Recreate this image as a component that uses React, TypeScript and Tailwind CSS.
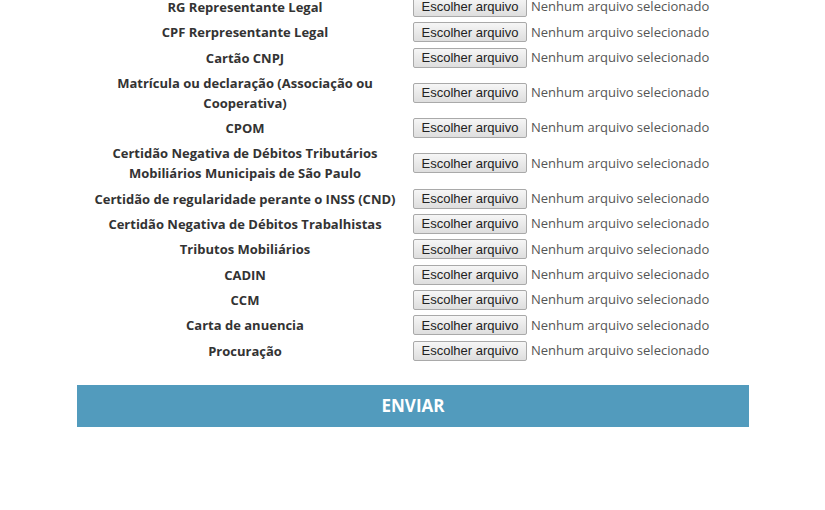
import React from "react";

const fields: string[] = [
  "RG Representante Legal",
  "CPF Rerpresentante Legal",
  "Cartão CNPJ",
  "Matrícula ou declaração (Associação ou Cooperativa)",
  "CPOM",
  "Certidão Negativa de Débitos Tributários Mobiliários Municipais de São Paulo",
  "Certidão de regularidade perante o INSS (CND)",
  "Certidão Negativa de Débitos Trabalhistas",
  "Tributos Mobiliários",
  "CADIN",
  "CCM",
  "Carta de anuencia",
  "Procuração",
];

// ─── File picker row ──────────────────────────────────────────────────────────

function FileRow({ label }: { label: string }) {
  return (
    <div className="grid grid-cols-2 items-center pb-[5.3px]">
      <label className="px-[14px] text-center text-[13px] font-bold leading-[20px] text-[#333]">
        {label}
      </label>
      <div className="flex items-center">
        <span
          className="flex h-[20px] w-[114px] items-center justify-center rounded-[2px] border border-[#a9a9a9] bg-gradient-to-b from-[#f6f6f6] to-[#dedede] text-[13px] text-[#222]"
          style={{ fontFamily: '"Liberation Sans", Arial, sans-serif' }}
        >
          Escolher arquivo
        </span>
        <span className="ml-[4px] text-[13px] text-[#555]">
          Nenhum arquivo selecionado
        </span>
      </div>
    </div>
  );
}

export default function App() {
  return (
    <div
      className="h-[510px] w-[825px] overflow-hidden bg-white"
      style={{ fontFamily: '"Open Sans", "Noto Sans", sans-serif' }}
    >
      <form className="mx-[77px] mt-[-3px] w-[672px]">
        {fields.map((f) => (
          <FileRow key={f} label={f} />
        ))}
        <button
          type="button"
          className="mt-[19px] flex h-[42px] w-full items-center justify-center bg-[#529bbd] text-[17px] font-bold text-white"
        >
          ENVIAR
        </button>
      </form>
    </div>
  );
}
